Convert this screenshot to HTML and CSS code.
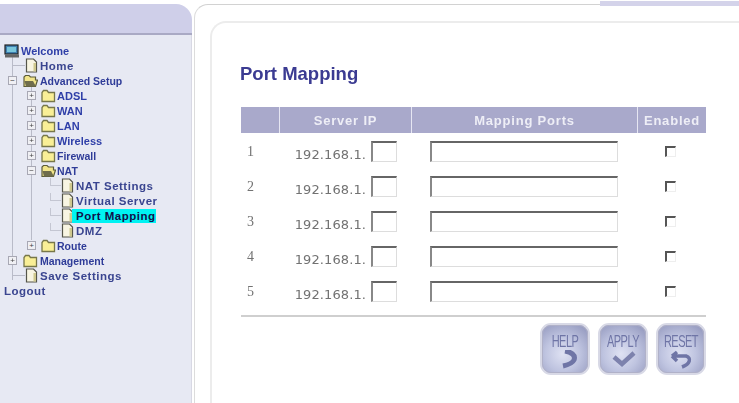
FILE: index.html
```html
<!DOCTYPE html>
<html lang="en">
<head>
  <meta charset="UTF-8" />
  <title>Port Mapping</title>
  <link rel="stylesheet" href="styles.css">
</head>
<body>

<svg width="0" height="0" class="defs">
  <symbol id="folder" viewBox="0 0 15 14">
    <path d="M1 12.5V3.5L2.5 1.5H6L7.5 3.5H13.5V12.5Z" fill="#f9ef96" stroke="#77774a" stroke-width="1.3"/>
  </symbol>
  <symbol id="folderOpen" viewBox="0 0 15 14">
    <path d="M1 12.5V3L2.5 1.5H6L7.5 3H12.5V6H14.5L12.5 12.5Z" fill="#f2e58a" stroke="#5c5c3a" stroke-width="1.2"/>
    <path d="M1.5 7H10L13 12.5H3Z" fill="#6f6d4c"/>
  </symbol>
  <symbol id="doc" viewBox="0 0 13 15">
    <path d="M1.5 1H8.5L11.5 4V14H1.5Z" fill="#f8f5e2" stroke="#55554a" stroke-width="1.2"/>
    <path d="M11 5V13.5H8.5V5Z" fill="#cfc88e"/>
  </symbol>
</svg>

<div class="page">
  <div class="sidebar">
    <div class="side-head"></div>
    <div class="side-body">
      <ul class="tree">
        <li class="row">
          <svg class="ico-monitor" viewBox="0 0 16 14">
            <rect x="1" y="1" width="13" height="9" fill="#3f7fb0" stroke="#222" stroke-width="1.2"/>
            <rect x="3" y="3" width="9" height="5" fill="#79c6dc"/>
            <path d="M1 13.5H15V10.5H1Z" fill="#666"/>
          </svg>
          <span class="lbl">Welcome</span>
        </li>
        <li class="row l1 doc-row">
          <svg class="ico-doc"><use href="#doc"/></svg>
          <span class="lbl big">Home</span>
        </li>
        <li class="row l1">
          <span class="exp">−</span>
          <svg class="ico-folder"><use href="#folderOpen"/></svg>
          <span class="lbl sm">Advanced Setup</span>
        </li>
        <li class="row l2">
          <span class="exp">+</span>
          <svg class="ico-folder"><use href="#folder"/></svg>
          <span class="lbl">ADSL</span>
        </li>
        <li class="row l2">
          <span class="exp">+</span>
          <svg class="ico-folder"><use href="#folder"/></svg>
          <span class="lbl">WAN</span>
        </li>
        <li class="row l2">
          <span class="exp">+</span>
          <svg class="ico-folder"><use href="#folder"/></svg>
          <span class="lbl">LAN</span>
        </li>
        <li class="row l2">
          <span class="exp">+</span>
          <svg class="ico-folder"><use href="#folder"/></svg>
          <span class="lbl">Wireless</span>
        </li>
        <li class="row l2">
          <span class="exp">+</span>
          <svg class="ico-folder"><use href="#folder"/></svg>
          <span class="lbl sm">Firewall</span>
        </li>
        <li class="row l2">
          <span class="exp">−</span>
          <svg class="ico-folder"><use href="#folderOpen"/></svg>
          <span class="lbl sm">NAT</span>
        </li>
        <li class="row l3 doc-row">
          <svg class="ico-doc"><use href="#doc"/></svg>
          <span class="lbl big">NAT Settings</span>
        </li>
        <li class="row l3 doc-row">
          <svg class="ico-doc"><use href="#doc"/></svg>
          <span class="lbl big">Virtual Server</span>
        </li>
        <li class="row l3 doc-row">
          <svg class="ico-doc"><use href="#doc"/></svg>
          <span class="lbl big current">Port Mapping</span>
        </li>
        <li class="row l3 doc-row">
          <svg class="ico-doc"><use href="#doc"/></svg>
          <span class="lbl big">DMZ</span>
        </li>
        <li class="row l2">
          <span class="exp">+</span>
          <svg class="ico-folder"><use href="#folder"/></svg>
          <span class="lbl sm">Route</span>
        </li>
        <li class="row l1">
          <span class="exp">+</span>
          <svg class="ico-folder"><use href="#folder"/></svg>
          <span class="lbl sm">Management</span>
        </li>
        <li class="row l1 doc-row">
          <svg class="ico-doc"><use href="#doc"/></svg>
          <span class="lbl big">Save Settings</span>
        </li>
        <li class="row logout"><span class="lbl big">Logout</span></li>
      </ul>
    </div>
  </div>

  <div class="main">
    <div class="top-tab"></div>
    <div class="content">
      <h1>Port Mapping</h1>
      <table class="ports">
        <thead>
          <tr>
            <th class="c-num"></th>
            <th class="c-ip">Server IP</th>
            <th class="c-map">Mapping Ports</th>
            <th class="c-en">Enabled</th>
          </tr>
        </thead>
        <tbody>
          <tr>
            <td class="c-num">1</td>
            <td class="c-ip">192.168.1.<input class="ip" type="text"></td>
            <td class="c-map"><input class="map" type="text"></td>
            <td class="c-en"><span class="check"></span></td>
          </tr>
          <tr>
            <td class="c-num">2</td>
            <td class="c-ip">192.168.1.<input class="ip" type="text"></td>
            <td class="c-map"><input class="map" type="text"></td>
            <td class="c-en"><span class="check"></span></td>
          </tr>
          <tr>
            <td class="c-num">3</td>
            <td class="c-ip">192.168.1.<input class="ip" type="text"></td>
            <td class="c-map"><input class="map" type="text"></td>
            <td class="c-en"><span class="check"></span></td>
          </tr>
          <tr>
            <td class="c-num">4</td>
            <td class="c-ip">192.168.1.<input class="ip" type="text"></td>
            <td class="c-map"><input class="map" type="text"></td>
            <td class="c-en"><span class="check"></span></td>
          </tr>
          <tr>
            <td class="c-num">5</td>
            <td class="c-ip">192.168.1.<input class="ip" type="text"></td>
            <td class="c-map"><input class="map" type="text"></td>
            <td class="c-en"><span class="check"></span></td>
          </tr>
        </tbody>
      </table>
      <div class="rule"></div>
      <div class="actions">
        <div class="btn">
          <span class="btn-text">HELP</span>
          <svg class="btn-ico" viewBox="0 0 32 20"><path d="M16 1C22 2 27 5 25 10C23 14 19 15 14 16" fill="none" stroke="#6f75a6" stroke-width="5"/></svg>
        </div>
        <div class="btn">
          <span class="btn-text">APPLY</span>
          <svg class="btn-ico" viewBox="0 0 32 20"><path d="M7 7L15 14L27 3" fill="none" stroke="#7d82ad" stroke-width="4.5"/></svg>
        </div>
        <div class="btn">
          <span class="btn-text">RESET</span>
          <svg class="btn-ico" viewBox="0 0 32 20"><path d="M7 6H21C27 8 25 14 17 17M7 6L12 2M7 6L12 11" fill="none" stroke="#6f75a6" stroke-width="3.5"/></svg>
        </div>
      </div>
    </div>
  </div>
</div>

</body>
</html>
```

FILE: styles.css
```css
html, body {
  margin: 0;
  padding: 0;
  background: #fff;
}

.defs {
  position: absolute;
}

.page {
  display: flex;
  width: 739px;
  height: 403px;
  overflow: hidden;
  filter: blur(0.6px);
  font-family: "Liberation Sans", Arial, sans-serif;
}

/* left menu */
.sidebar {
  width: 192px;
  flex: none;
  padding-top: 4px;
  box-sizing: border-box;
  display: flex;
  flex-direction: column;
}

.side-head {
  height: 29px;
  background: #cfcfe9;
  border-bottom: 2px solid #a9a9c4;
  border-top-right-radius: 16px;
}

.side-body {
  flex: 1;
  background: #e7e9f3;
  border-right: 1px solid #d8d8e4;
  padding-top: 8px;
}

.tree {
  list-style: none;
  margin: 0;
  padding: 0;
  position: relative;
}

/* tree guide lines */
.tree::before {
  content: "";
  position: absolute;
  left: 12px;
  top: 12px;
  height: 225px;
  width: 1px;
  background: #b9bbc8;
}

.tree::after {
  content: "";
  position: absolute;
  left: 31px;
  top: 42px;
  height: 155px;
  width: 1px;
  background: #b9bbc8;
}

.row {
  display: flex;
  align-items: center;
  height: 15px;
  padding-left: 4px;
  color: #2f3fa8;
  font-size: 11px;
  font-weight: bold;
  white-space: nowrap;
  position: relative;
  z-index: 1;
}

.row.l1 { padding-left: 8px; }
.row.l2 { padding-left: 27px; }
.row.l3 { padding-left: 61px; }
.row.l1.doc-row { padding-left: 25px; }
.row.logout { padding-left: 4px; }

/* horizontal tree connectors */
.row.l1.doc-row::before {
  content: "";
  position: absolute;
  left: 13px;
  top: 7px;
  width: 12px;
  height: 1px;
  background: #b9bbc8;
}

.row.l3::before {
  content: "";
  position: absolute;
  left: 50px;
  top: 0;
  width: 11px;
  height: 8px;
  border-left: 1px solid #c4c6d2;
  border-bottom: 1px solid #c4c6d2;
  box-sizing: border-box;
}

.ico-monitor {
  width: 16px;
  height: 14px;
  margin-right: 1px;
}

.ico-folder {
  width: 15px;
  height: 14px;
  flex: none;
}

.l1 .ico-folder { margin-left: 6px; margin-right: 2px; }
.l2 .ico-folder { margin-left: 5px; margin-right: 1px; }

.ico-doc {
  width: 13px;
  height: 15px;
  flex: none;
  margin-right: 2px;
}

.exp {
  box-sizing: border-box;
  width: 9px;
  height: 9px;
  border: 1px solid #a8a8b4;
  background: #f0f0f4;
  color: #444;
  font-size: 8px;
  font-weight: normal;
  line-height: 7px;
  text-align: center;
  flex: none;
}

.lbl.sm {
  font-size: 10.5px;
  color: #2f3c98;
}

.lbl.big {
  font-size: 11.5px;
  letter-spacing: 0.5px;
  color: #3a4590;
}

.lbl.current {
  background: #00f2f2;
  color: #10104a;
  padding: 1px 0 1px 4px;
  margin-left: -4px;
  width: 80px;
}

/* right side */
.main {
  flex: 1;
  min-width: 0;
  margin: 4px 0 0 2px;
  border-top: 1px solid #d2d2d2;
  border-left: 1px solid #dcdcdc;
  border-top-left-radius: 14px;
  position: relative;
  display: flex;
  flex-direction: column;
}

.top-tab {
  position: absolute;
  top: -4px;
  right: 0;
  width: 139px;
  height: 5px;
  background: #d4d3ea;
}

.content {
  margin: 16px 0 0 15px;
  flex: 1;
  border-top: 2px solid #ececec;
  border-left: 2px solid #ececec;
  border-top-left-radius: 16px;
  padding-left: 29px;
}

h1 {
  margin: 0 0 0 -1px;
  padding-top: 40px;
  font-size: 18.5px;
  line-height: 22px;
  color: #3b3b92;
  height: 44px;
}

.ports {
  border-collapse: separate;
  border-spacing: 0;
  table-layout: fixed;
  width: 465px;
}

.ports th {
  box-sizing: border-box;
  height: 26px;
  padding: 0;
  background: #a9a9cb;
  color: #eeeef6;
  font-size: 13px;
  font-weight: bold;
  letter-spacing: 0.8px;
  border-left: 1px solid #e6e6f2;
}

.ports th:first-child {
  border-left: none;
}

.c-num { width: 38px; }
.c-ip { width: 132px; }
.c-map { width: 226px; }
.c-en { width: 69px; }

.ports td {
  height: 33px;
  padding: 2px 0 0;
  color: #727272;
  font-family: "DejaVu Sans", sans-serif;
  font-size: 13px;
}

.ports td.c-num {
  padding-left: 6px;
  font-family: "Liberation Serif", serif;
  font-size: 14px;
}

.ports td.c-ip {
  text-align: right;
  padding-right: 14px;
  white-space: nowrap;
  letter-spacing: 0.1px;
}

.ports td.c-map {
  padding-left: 19px;
}

.ports td.c-en {
  text-align: center;
  padding-right: 2px;
}

.ip, .map {
  box-sizing: border-box;
  height: 21px;
  padding: 0;
  background: #fff;
  border: 1px solid #ddd;
  border-top: 2px solid #666;
  border-left: 2px solid #888;
  outline: none;
}

.ip {
  width: 26px;
  margin-left: 5px;
  vertical-align: 2px;
}

.map {
  width: 188px;
  display: block;
}

.check {
  display: inline-block;
  box-sizing: border-box;
  width: 11px;
  height: 11px;
  vertical-align: middle;
  margin-bottom: 2px;
  border: 1px solid #eee;
  border-top: 2px solid #555;
  border-left: 2px solid #555;
}

.rule {
  width: 465px;
  margin-top: 7px;
  height: 2px;
  background: #cfcfcf;
}

.actions {
  display: flex;
  justify-content: flex-end;
  gap: 8px;
  width: 465px;
  margin-top: 6px;
}

.btn {
  box-sizing: border-box;
  width: 50px;
  height: 52px;
  border-radius: 11px;
  border: 2px solid #d8d9e6;
  outline: 1px solid #b0b1c8;
  outline-offset: -3px;
  background: radial-gradient(circle at 45% 60%, #dfe2f3 0%, #bfc4e0 45%, #8c91b8 100%);
  display: flex;
  flex-direction: column;
  align-items: center;
  overflow: hidden;
  padding-top: 7px;
}

.btn-text {
  color: #6f75a6;
  font-size: 11px;
  line-height: 12px;
  transform: scaleY(1.55);
  margin-top: 3px;
  margin-bottom: 3px;
  letter-spacing: -0.5px;
}

.btn-ico {
  width: 32px;
  height: 20px;
  flex: none;
}
```
